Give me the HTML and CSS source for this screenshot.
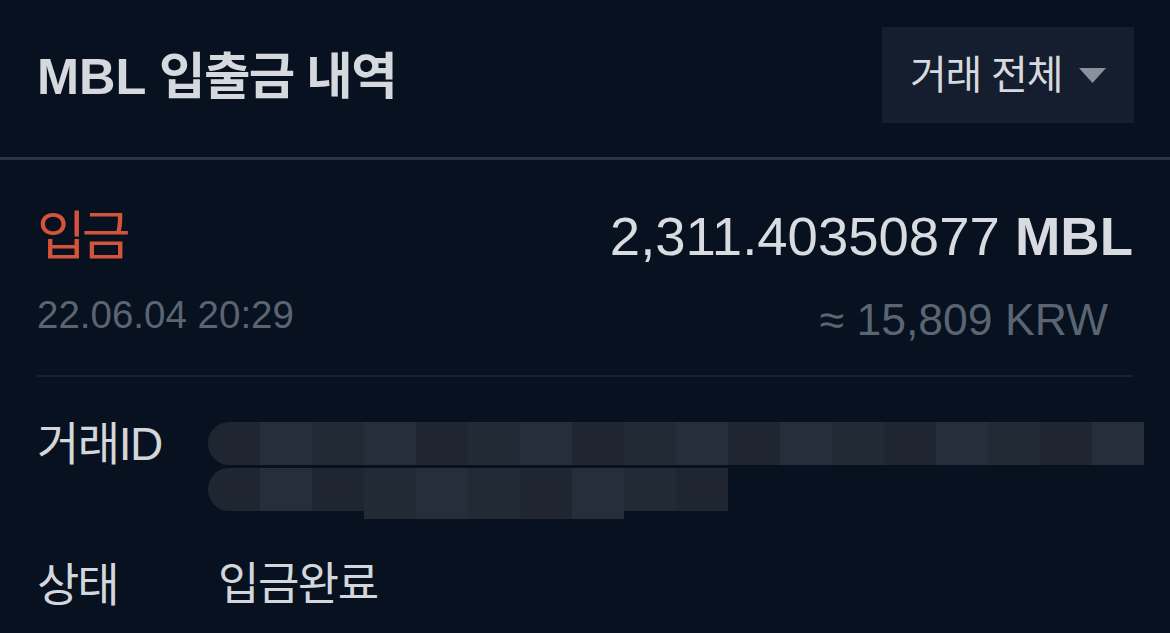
FILE: index.html
```html
<!DOCTYPE html>
<html lang="ko">
<head>
<meta charset="utf-8">
<title>MBL 입출금 내역</title>
<link rel="stylesheet" href="styles.css">
</head>
<body>
<div class="page">
  <header class="header">
    <h1 class="title"><span class="latin">MBL</span> 입출금 내역</h1>
    <button class="filter" type="button">
      <span class="filter-label">거래 전체</span>
      <svg class="caret" width="27" height="15" viewBox="0 0 27 15"><polygon points="0,0 27,0 13.5,15" fill="#8b909a"/></svg>
    </button>
  </header>

  <section class="summary">
    <div class="row-top">
      <span class="kind">입금</span>
      <span class="amount">2,311.40350877 <b>MBL</b></span>
    </div>
    <div class="row-sub">
      <span class="date">22.06.04 20:29</span>
      <span class="krw">≈ 15,809 KRW</span>
    </div>
  </section>

  <section class="details">
    <div class="detail">
      <span class="label">거래ID</span>
      <div class="value redacted" aria-label="가려진 거래ID">
        <div class="blur-line line1">
          <i class="c1 first"></i><i class="c2"></i><i class="c3"></i><i class="c2"></i><i class="c1"></i><i class="c3"></i><i class="c2"></i><i class="c1"></i><i class="c3"></i><i class="c2"></i><i class="c1"></i><i class="c2"></i><i class="c3"></i><i class="c1"></i><i class="c2"></i><i class="c3"></i><i class="c1"></i><i class="c2"></i>
        </div>
        <div class="blur-line line2">
          <i class="c1 first"></i><i class="c2"></i><i class="c1"></i><i class="c3 low"></i><i class="c2 low"></i><i class="c3 low"></i><i class="c1 low"></i><i class="c2 low"></i><i class="c3"></i><i class="c1"></i>
        </div>
      </div>
    </div>
    <div class="detail status">
      <span class="label">상태</span>
      <span class="value">입금완료</span>
    </div>
  </section>
</div>
</body>
</html>
```

FILE: styles.css
```css
* { box-sizing: border-box; }
html, body {
  margin: 0;
  padding: 0;
  background: #07111f;
}
body {
  font-family: "Liberation Sans", "Noto Sans CJK KR", sans-serif;
  color: #d6d9de;
  width: 1170px;
  height: 633px;
  overflow: hidden;
}
.page { width: 1170px; }

.header {
  display: flex;
  justify-content: space-between;
  align-items: center;
  padding: 27px 36px 34px 37px;
  border-bottom: 3px solid #2a3442;
}
.title {
  margin: 0;
  font-size: 50.5px;
  font-weight: 700;
  letter-spacing: -1.5px;
  color: #d5d8dd;
  line-height: 96px;
  height: 96px;
  padding-top: 2px;
  white-space: nowrap;
}
.title .latin { letter-spacing: 0; }

.filter {
  display: flex;
  align-items: center;
  gap: 17px;
  width: 252px;
  height: 96px;
  flex: none;
  padding: 0 27px 0 28px;
  background: #151e2e;
  border: 0;
  font-family: inherit;
  color: #d6d9de;
  font-size: 40px;
  letter-spacing: -1.2px;
  white-space: nowrap;
}
.filter-label { line-height: 1; }
.caret { flex: none; }

.summary {
  margin: 0 37px;
  padding-top: 47px;
  padding-bottom: 36px;
  border-bottom: 2px solid #172130;
}
.row-top {
  display: flex;
  justify-content: space-between;
  align-items: center;
  height: 60px;
}
.kind {
  color: #d4533b;
  font-size: 53px;
  letter-spacing: -4px;
  line-height: 60px;
}
.amount {
  font-size: 54.5px;
  color: #d8dbe0;
  line-height: 60px;
  white-space: nowrap;
}
.amount b { font-weight: 700; }
.row-sub {
  display: flex;
  justify-content: space-between;
  align-items: center;
  margin-top: 24px;
  height: 48px;
}
.date {
  font-size: 38.5px;
  color: #5b6472;
  line-height: 48px;
}
.krw {
  font-size: 44.5px;
  color: #5b6472;
  line-height: 48px;
  margin-right: 25px;
  margin-top: 10px;
}

.details { padding: 45px 0 0 37px; }
.detail {
  display: grid;
  grid-template-columns: 171px 1fr;
  align-items: start;
}
.label {
  font-size: 46px;
  letter-spacing: -1.5px;
  line-height: 44px;
  color: #d3d6db;
}
.status { margin-top: 52px; }
.status .label { letter-spacing: -2px; }
.status .value {
  font-size: 45px;
  letter-spacing: -1.5px;
  line-height: 44px;
  padding-left: 10px;
  color: #d3d6db;
}

.redacted {
  display: flex;
  flex-direction: column;
  gap: 3px;
}
.blur-line {
  display: flex;
  height: 43px;
}
.blur-line i {
  display: block;
  width: 52px;
  height: 43px;
}
.blur-line i.first { border-radius: 21px 0 0 21px; }
.line2 i.low { height: 51px; }
.c1 { background: #1f2632; }
.c2 { background: #262e3b; }
.c3 { background: #222a36; }
```
